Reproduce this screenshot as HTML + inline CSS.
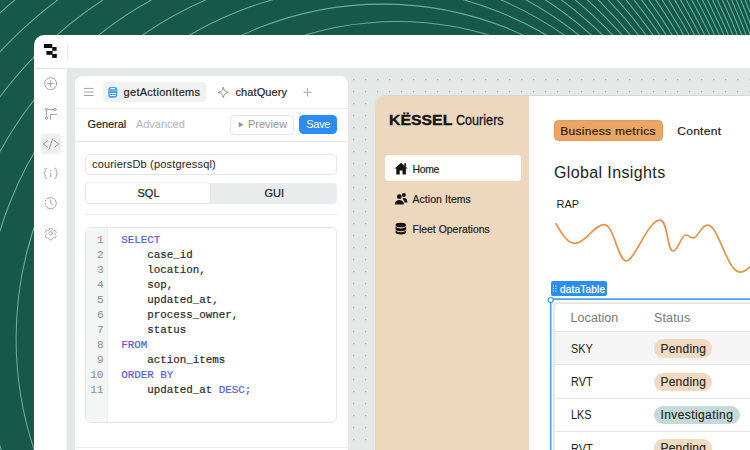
<!DOCTYPE html>
<html><head><meta charset="utf-8"><title>Retool</title>
<style>
html,body{margin:0;padding:0}
body{width:750px;height:450px;overflow:hidden;position:relative;background:#185848;font-family:"Liberation Sans",sans-serif;color:#222}
.a{position:absolute}
.t{position:absolute;white-space:nowrap;line-height:16px;font-size:11px}
.ln{position:absolute;left:86px;width:17.6px;text-align:right;font:11.2px/15px "Liberation Mono",monospace;color:#969696;-webkit-text-stroke:.1px;margin-top:-.3px}
.cl{position:absolute;font:10.85px/15px "Liberation Mono",monospace;color:#2a2a2a;white-space:pre;-webkit-text-stroke:.2px}
.k{color:#5560d6}
.hl{position:absolute;background:#e9ecec;height:1px}
.nav{position:absolute;left:412.5px;font-size:10.4px;line-height:14px;white-space:nowrap;color:#1d1d1d;-webkit-text-stroke:0.2px #1d1d1d}
.row{position:absolute;left:555px;width:195px;height:33.2px;border-top:1px solid #e6e6e6;box-sizing:border-box}
.loc{position:absolute;left:570.6px;font-size:12.5px;line-height:16px;color:#222;white-space:nowrap;transform-origin:0 50%;transform:scaleX(.87)}
.badge{position:absolute;left:654px;height:18.4px;border-radius:9.2px;background:#f0dac1;font-size:12px;letter-spacing:.25px;-webkit-text-stroke:.15px;line-height:18.4px;padding-left:6.4px;box-sizing:border-box;color:#2a2622;white-space:nowrap}
</style></head><body>
<svg class="a" style="left:0;top:0" width="750" height="450" viewBox="0 0 750 450" fill="none" stroke="#5fb198" stroke-width="1.05">
<circle cx="397.2" cy="338.5" r="316.9"/>
<circle cx="382.6" cy="338.5" r="334.4"/>
<circle cx="368.0" cy="338.5" r="351.9"/>
<circle cx="353.4" cy="338.5" r="369.4"/>
<circle cx="338.8" cy="338.5" r="386.9"/>
<circle cx="324.2" cy="338.5" r="404.4"/>
<circle cx="309.6" cy="338.5" r="421.9"/>
<circle cx="295.1" cy="338.5" r="439.4"/>
<circle cx="280.5" cy="338.5" r="456.9"/>
<circle cx="265.9" cy="338.5" r="474.4"/>
<circle cx="251.3" cy="338.5" r="491.9"/>
<circle cx="236.8" cy="338.5" r="509.4"/>
<circle cx="222.2" cy="338.5" r="526.9"/>
<circle cx="207.6" cy="338.5" r="544.4"/>
<circle cx="193.1" cy="338.5" r="561.9"/>
<circle cx="178.5" cy="338.5" r="579.4"/>
<circle cx="164.0" cy="338.5" r="596.9"/>
<circle cx="149.4" cy="338.5" r="614.4"/>
<circle cx="134.9" cy="338.5" r="631.9"/>
<circle cx="120.4" cy="338.5" r="649.4"/>
<circle cx="105.8" cy="338.5" r="666.9"/>
<circle cx="91.3" cy="338.5" r="684.4"/>
<circle cx="76.8" cy="338.5" r="701.9"/>
<circle cx="62.3" cy="338.5" r="719.4"/>
<circle cx="47.8" cy="338.5" r="736.9"/>
<circle cx="33.3" cy="338.5" r="754.4"/>
<circle cx="18.8" cy="338.5" r="771.9"/>
<circle cx="4.2" cy="338.5" r="789.4"/>
<circle cx="-10.2" cy="338.5" r="806.9"/>
<circle cx="-24.7" cy="338.5" r="824.4"/>
<circle cx="-39.2" cy="338.5" r="841.9"/>
<circle cx="-53.7" cy="338.5" r="859.4"/>
<circle cx="-68.2" cy="338.5" r="876.9"/>
<circle cx="-82.7" cy="338.5" r="894.4"/>
<circle cx="-97.2" cy="338.5" r="911.9"/>
<circle cx="-111.6" cy="338.5" r="929.4"/>
<circle cx="-126.1" cy="338.5" r="946.9"/>
<circle cx="-140.6" cy="338.5" r="964.4"/>
</svg>
<!-- window -->
<div class="a" style="left:33.9px;top:34.7px;width:717px;height:416px;background:#fff;border-top-left-radius:10px"></div>
<!-- gray canvas -->
<div class="a" id="canvas" style="left:67.5px;top:67.5px;width:683px;height:383px;background-color:#e4e9e8"></div>
<div class="a" style="left:68px;top:69px;width:682px;height:381px;background-image:radial-gradient(circle at .5px .5px,#a9b5b3 .5px,rgba(169,181,179,0) 1.2px);background-size:12px 12px;background-position:9px 10px"></div>
<div class="hl" style="left:35px;top:67.5px;width:33px;background:#e4e6e6"></div>
<div class="a" style="left:67px;top:42.5px;width:1px;height:18px;background:#eceeee"></div>
<div class="a" style="left:67px;top:68px;width:1px;height:383px;background:#e0e5e3"></div>
<!-- logo -->
<svg class="a" style="left:40px;top:40px" width="24" height="24" viewBox="40 40 24 24" fill="#0d0d0d">
<rect x="43.9" y="44" width="8.4" height="4"/><rect x="52.2" y="47" width="4.4" height="3.8"/>
<rect x="46.4" y="51" width="6.2" height="3.8"/><rect x="52.2" y="54" width="4.6" height="3.9"/>
</svg>
<!-- sidebar icons -->
<svg class="a" style="left:35px;top:70px" width="33" height="180" viewBox="35 70 33 180" fill="none" stroke="#9e9e9c" stroke-width=".95" stroke-linecap="round" stroke-linejoin="round">
<rect x="40.7" y="133.7" width="20.6" height="20.4" rx="4" fill="#eeefef" stroke="none"/>
<circle cx="50.7" cy="83.7" r="6"/><path d="M50.7 80.6v6.2M47.6 83.7h6.2"/>
<circle cx="46.5" cy="109.5" r="1.2"/><circle cx="55" cy="109.5" r="1.2"/><circle cx="46.5" cy="118" r="1.2"/>
<path d="M47.7 109.5h6.1M46.5 110.7v6.1M50.5 119.2v-4.7h6"/>
<path d="M47.3 140.9l-4 3.1 4 3.1M52.7 138.7l-3.7 10.6M54.7 140.9l3.8 3.1-3.8 3.1" stroke="#94948e" stroke-width="1"/>
<path d="M46.8 168.2c-1.6 0-1.7 .8-1.7 1.8v1.6c0 1-.5 1.6-1.3 1.7c.8 .1 1.3 .7 1.3 1.7v1.6c0 1 .1 1.8 1.7 1.8M54.6 168.2c1.6 0 1.7 .8 1.7 1.8v1.6c0 1 .5 1.6 1.3 1.7c-.8 .1-1.3 .7-1.3 1.7v1.6c0 1-.1 1.8-1.7 1.8M50.7 172.9v3.8" stroke="#98a3a0"/>
<circle cx="50.7" cy="170.6" r=".7" fill="#98a3a0" stroke="none"/>
<path d="M47.2 198.6A5.7 5.7 0 1 1 45.6 206" /><path d="M45.3 204.2l-.3-1.2M45.2 201.3l.4-1.2" stroke-width="1"/><path d="M50.7 200.2v3.2l2 1.6"/>
<g transform="translate(50.7 233.3) scale(.84) translate(-50.7 -233.3)"><circle cx="50.7" cy="233.3" r="2.1"/>
<path d="M49.3 227.6h2.8l.6 1.8 1.4 .8 1.9-.4 1.4 2.4-1.3 1.4v1.6l1.3 1.4-1.4 2.4-1.9-.4-1.4 .8-.6 1.8h-2.8l-.6-1.8-1.4-.8-1.9 .4-1.4-2.4 1.3-1.4v-1.6l-1.3-1.4 1.4-2.4 1.9 .4 1.4-.8z"/></g>
</svg>
<!-- query panel -->
<div class="a" style="left:75px;top:76.4px;width:272.6px;height:380px;background:#fff;border-radius:8px 8px 0 0"></div>
<div class="hl" style="left:75px;top:107.5px;width:272.6px"></div>
<div class="hl" style="left:75px;top:141.2px;width:272.6px"></div>
<div class="hl" style="left:85px;top:214px;width:252px"></div>
<div class="hl" style="left:75px;top:446.5px;width:272.6px"></div>
<svg class="a" style="left:80px;top:84px" width="16" height="16" viewBox="80 84 16 16" stroke="#a3a39d" stroke-width="1" fill="none"><path d="M84 88.4h9.6M84 92h9.6M84 95.5h9.6"/></svg>
<div class="a" style="left:103.3px;top:82px;width:102.6px;height:20px;border-radius:4px;background:#f0f2f2"></div>
<svg class="a" style="left:106px;top:84px" width="14" height="16" viewBox="106 84 14 16" stroke="none">
<rect x="108.300" y="87" width="8.900" height="10.700" rx="2.600" ry="2.300" fill="#45a0f5"/>
<rect x="110.200" y="88.100" width="5.100" height="1" rx=".5" fill="#e6f1fe"/>
<rect x="109.500" y="89.700" width="6.500" height="1.300" rx=".6" fill="#8fc4f9"/>
<rect x="109.500" y="92.900" width="6.500" height="1.100" rx=".4" fill="#eef5fe"/>
<rect x="109.700" y="95" width="6.100" height="1.100" rx=".4" fill="#eef5fe"/>
</svg>
<div class="t" id="t1" style="left:123.6px;top:84px;letter-spacing:.28px;color:#1f1f1f;-webkit-text-stroke:.2px #1f1f1f">getActionItems</div>
<svg class="a" style="left:216px;top:85px" width="15" height="15" viewBox="216 85 15 15" fill="none" stroke="#8d8d88" stroke-width="1" stroke-linejoin="round"><path d="M223.300 87.200c.6 3 1.700 4.400 5.100 5.200c-3.400 .8-4.500 2.200-5.100 5.200c-.6-3-1.700-4.400-5.100-5.200c3.400-.8 4.500-2.200 5.100-5.200z"/></svg>
<div class="t" id="t2" style="left:235.500px;top:84px;letter-spacing:.1px;color:#1f1f1f;-webkit-text-stroke:.2px #1f1f1f">chatQuery</div>
<svg class="a" style="left:300px;top:85px" width="15" height="15" viewBox="300 85 15 15" stroke="#a8a8a4" stroke-width="1" fill="none"><path d="M307.600 88.300v8.200M303.500 92.400h8.200"/></svg>
<div class="t" id="t3" style="left:87.600px;top:115.900px;letter-spacing:-.1px;color:#1b1b1b;-webkit-text-stroke:.15px #1b1b1b">General</div>
<div class="t" id="t4" style="left:135.900px;top:115.900px;color:#b3b3b3">Advanced</div>
<div class="a" style="left:230.400px;top:114.600px;width:63.200px;height:20px;border:1px solid #e3e5e5;border-radius:4.500px;box-sizing:border-box;background:#fff"></div>
<svg class="a" style="left:237px;top:120px" width="8" height="10" viewBox="237 120 8 10" fill="#999"><path d="M238.700 121.700l4.800 2.950-4.800 2.950z"/></svg>
<div class="t" id="t5" style="left:248px;top:115.900px;color:#939393">Preview</div>
<div class="a" style="left:299.300px;top:114.700px;width:38px;height:19.800px;border-radius:4.500px;background:#2b8df2"></div>
<div class="t" id="t6" style="left:306.300px;top:116.100px;color:#fff;letter-spacing:-.3px">Save</div>
<div class="a" style="left:85.200px;top:153.500px;width:251.800px;height:21.500px;border:1px solid #e6e8e8;border-radius:4px;box-sizing:border-box"></div>
<div class="t" id="t7" style="left:92px;top:156.300px;letter-spacing:.17px;color:#222">couriersDb (postgressql)</div>
<div class="a" style="left:85.200px;top:182.700px;width:251.800px;height:21.300px;border-radius:4px;background:#e9ecec"></div>
<div class="a" style="left:85.700px;top:183.200px;width:124.500px;height:20.300px;border-radius:3.500px;background:#fff;box-shadow:0 0 0 .5px #e2e4e4"></div>
<div class="t" id="t8" style="left:137.500px;top:185.400px;color:#222;-webkit-text-stroke:.2px #222">SQL</div>
<div class="t" id="t9" style="left:264.500px;top:185.400px;color:#222;-webkit-text-stroke:.2px #222">GUI</div>
<!-- editor -->
<div class="a" style="left:85.200px;top:226.900px;width:251.800px;height:196.200px;border:1px solid #e4e6e6;border-radius:6px;box-sizing:border-box;background:#fff;overflow:hidden"><div style="position:absolute;left:0;top:0;width:20.900px;height:100%;background:#f4f5f5;border-right:1px solid #ececec"></div></div>
<div class="ln" style="top:233.0px">1</div><div class="cl" style="top:233.0px;left:121.20px"><span class="k">SELECT</span></div>
<div class="ln" style="top:248.0px">2</div><div class="cl" style="top:248.0px;left:147.24px">case_id</div>
<div class="ln" style="top:263.0px">3</div><div class="cl" style="top:263.0px;left:147.24px">location,</div>
<div class="ln" style="top:278.0px">4</div><div class="cl" style="top:278.0px;left:147.24px">sop,</div>
<div class="ln" style="top:293.0px">5</div><div class="cl" style="top:293.0px;left:147.24px">updated_at,</div>
<div class="ln" style="top:308.0px">6</div><div class="cl" style="top:308.0px;left:147.24px">process_owner,</div>
<div class="ln" style="top:323.0px">7</div><div class="cl" style="top:323.0px;left:147.24px">status</div>
<div class="ln" style="top:338.0px">8</div><div class="cl" style="top:338.0px;left:121.20px"><span class="k">FROM</span></div>
<div class="ln" style="top:353.0px">9</div><div class="cl" style="top:353.0px;left:147.24px">action_items</div>
<div class="ln" style="top:368.0px">10</div><div class="cl" style="top:368.0px;left:121.20px"><span class="k">ORDER BY</span></div>
<div class="ln" style="top:383.0px">11</div><div class="cl" style="top:383.0px;left:147.24px">updated_at <span class="k">DESC;</span></div>

<!-- app preview -->
<div class="a" style="left:376.300px;top:95.500px;width:380px;height:360px;background:#fff;border-top-left-radius:9px;box-shadow:0 0 0 1px #d5dad8;overflow:hidden"><div style="position:absolute;left:0;top:0;width:152.700px;height:100%;background:#eed8bd"></div></div>
<div class="a" id="logoK" style="left:388.900px;top:111.300px;font-size:14.200px;line-height:18px;font-weight:bold;color:#141414;-webkit-text-stroke:.35px #141414;white-space:nowrap;transform-origin:0 50%;transform:scaleX(1.115)">KËSSEL</div>
<div class="a" id="logoC" style="left:456px;top:111.100px;font-size:15.200px;line-height:18px;color:#141414;-webkit-text-stroke:.3px #141414;white-space:nowrap;transform-origin:0 50%;transform:scaleX(.83)">Couriers</div>
<div class="a" style="left:384.700px;top:155px;width:136.400px;height:26.400px;border-radius:4px;background:#fff"></div>
<svg class="a" style="left:393px;top:160px" width="16" height="16" viewBox="393 160 16 16" fill="#141414"><path d="M401.100 162.800l6.500 5.700h-1.700v5.900h-3.400v-3.900h-2.800v3.900h-3.400v-5.900h-1.700z"/><rect x="404.300" y="163.300" width="1.700" height="3"/></svg>
<div class="nav" id="n1" style="top:162.900px;letter-spacing:-.3px">Home</div>
<svg class="a" style="left:393px;top:191px" width="16" height="16" viewBox="393 191 16 16" fill="#141414"><circle cx="399.300" cy="196.700" r="2.400"/><path d="M394.700 204.600c0-3 2-4.600 4.600-4.600s4.600 1.600 4.600 4.600z"/><circle cx="403.900" cy="195" r="2"/><path d="M404.100 197.900c2 0 3.300 1.400 3.300 4.500h-2.900c-.2-1.500-.9-2.800-2-3.600c.4-.6 .9-.9 1.600-.9z"/></svg>
<div class="nav" id="n2" style="top:192.600px;letter-spacing:.1px">Action Items</div>
<svg class="a" style="left:393px;top:220px" width="16" height="16" viewBox="393 220 16 16" fill="#141414"><ellipse cx="400.800" cy="225" rx="5.300" ry="2.300"/><path d="M395.500 226.600c1 1.300 3 1.900 5.300 1.900s4.300-.6 5.300-1.900v2.400c0 1.300-2.400 2.300-5.300 2.300s-5.300-1-5.300-2.300z"/><path d="M395.500 230.300c1 1.300 3 1.900 5.300 1.900s4.300-.6 5.300-1.900v2c0 1.300-2.400 2.300-5.300 2.300s-5.300-1-5.300-2.300z"/></svg>
<div class="nav" id="n3" style="top:222.700px;letter-spacing:.03px">Fleet Operations</div>
<!-- main -->
<div class="a" style="left:554px;top:120.200px;width:108.500px;height:21px;border-radius:4.500px;background:#eba665;border:1px solid #e39a58;box-sizing:border-box"></div>
<div class="t" id="m1" style="left:560.300px;top:123px;transform:scaleY(.93);font-size:12px;letter-spacing:.3px;color:#2b1c0e;-webkit-text-stroke:.2px #2b1c0e">Business metrics</div>
<div class="t" id="m2" style="left:677.200px;top:123px;transform:scaleY(.93);font-size:12px;letter-spacing:.3px;color:#1d1d1d;-webkit-text-stroke:.2px #1d1d1d">Content</div>
<div class="t" id="m3" style="left:554px;top:163px;font-size:16px;line-height:20px;letter-spacing:.38px;color:#1d1d1d">Global Insights</div>
<div class="t" id="m4" style="left:556.600px;top:196.300px;font-size:11px;color:#1d1d1d">RAP</div>
<svg class="a" style="left:540px;top:210px" width="210" height="70" viewBox="540 210 210 70" fill="none" stroke="#e4954d" stroke-width="1.700" stroke-linecap="round" stroke-linejoin="round">
<path id="spark" d="M556 223.800C561 232 567 243.400 575 243.400C585 243.400 595 224 604.400 224.600C614 225.200 618 261 626.300 261C635 261 648 219 660.400 220.200C668 221 667 251 673 251C678 251 681 235.500 685.600 235C689 234.600 690 238.500 693.500 237.800C699 236.700 701 224.500 708 225.200C719 226.300 727 272 740.200 272.200C745 272.300 748 268.500 752 265"/>
</svg>
<!-- dataTable tag -->
<div class="a" style="left:551px;top:281.400px;width:56.300px;height:14.400px;border-radius:2px;background:#2b8df2"></div>
<svg class="a" style="left:551px;top:283px" width="8" height="11" viewBox="551 283 8 11" fill="#cfe4fc"><circle cx="553.400" cy="286" r=".7"/><circle cx="555.800" cy="286" r=".7"/><circle cx="553.400" cy="288.500" r=".7"/><circle cx="555.800" cy="288.500" r=".7"/><circle cx="553.400" cy="291" r=".7"/><circle cx="555.800" cy="291" r=".7"/></svg>
<div class="t" id="d1" style="left:560px;top:281.700px;font-size:10px;color:#fff;letter-spacing:.2px;-webkit-text-stroke:.25px #fff">dataTable</div>
<!-- table -->
<div class="a" style="left:553px;top:302px;width:200px;height:160px;border:2px solid #e6e9e9;border-radius:5px 0 0 0;box-sizing:border-box;background:#fff"></div>
<div class="t" id="h1" style="left:570.600px;top:310px;font-size:12.500px;letter-spacing:.06px;color:#7a7a7a">Location</div>
<div class="t" id="h2" style="left:654px;top:310px;font-size:12.500px;letter-spacing:.15px;color:#7a7a7a">Status</div>
<div class="row" style="top:331.200px;background:#f5f5f5"></div>
<div class="row" style="top:364.400px"></div>
<div class="row" style="top:397.700px"></div>
<div class="row" style="top:430.900px"></div>
<div class="loc" id="l1" style="top:341px">SKY</div>
<div class="loc" id="l2" style="top:374.200px">RVT</div>
<div class="loc" id="l3" style="top:407.400px">LKS</div>
<div class="loc" id="l4" style="top:440.600px">RVT</div>
<div class="badge" id="b1" style="top:339.300px;width:58.200px;padding-top:.8px">Pending</div>
<div class="badge" id="b2" style="top:372.500px;width:58.200px">Pending</div>
<div class="badge" id="b3" style="top:405.700px;width:85.700px;background:#c4d9d8;letter-spacing:.42px">Investigating</div>
<div class="badge" id="b4" style="top:438.900px;width:58.200px">Pending</div>
<!-- selection -->
<svg class="a" style="left:540px;top:290px" width="210" height="160" viewBox="540 290 210 160" fill="none"><path d="M550.700 452V299.100H752" stroke="#4a9ef4" stroke-width="1.550"/></svg>
<svg class="a" style="left:546px;top:295px" width="10" height="10" viewBox="546 295 10 10"><circle cx="550.700" cy="300" r="2.550" fill="#fff" stroke="#3f98f3" stroke-width="1.150"/></svg>
</body></html>
